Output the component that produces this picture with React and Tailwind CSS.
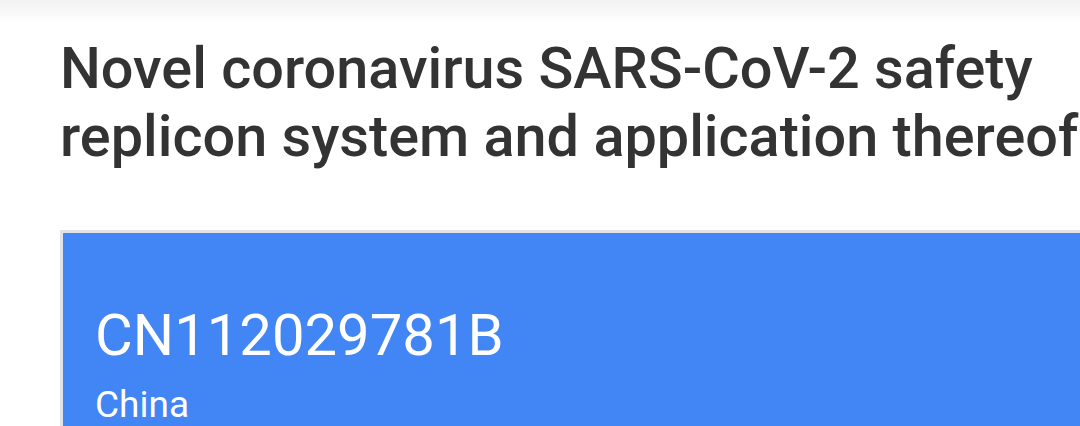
export default function App() {
  return (
    <div
      className="relative h-[426px] w-[1080px] overflow-hidden bg-white"
      style={{ fontFamily: "Roboto, 'Noto Sans', sans-serif" }}
    >
      {/* faint shadow of the app bar above */}
      <div className="pointer-events-none absolute inset-x-0 top-0 h-[24px] bg-gradient-to-b from-[#f2f2f2] to-white" />

      <div className="relative pl-[60px] pt-[35px]">
        <h1 className="w-[1080px] text-[57.6px] font-medium leading-[68px] text-[#333333]">
          Novel coronavirus SARS-CoV-2 safety replicon system and application thereof
        </h1>

        <div className="mt-[59px] h-[240px] w-[1100px] border-l-[3px] border-t-[3px] border-[#e0e3e8] bg-[#4285f4] px-8 pt-[69px] text-white">
          <div className="text-[58px] leading-[66px]">CN112029781B</div>
          <div className="mt-[15px] text-[37px] leading-[44px]">China</div>
        </div>
      </div>
    </div>
  );
}
